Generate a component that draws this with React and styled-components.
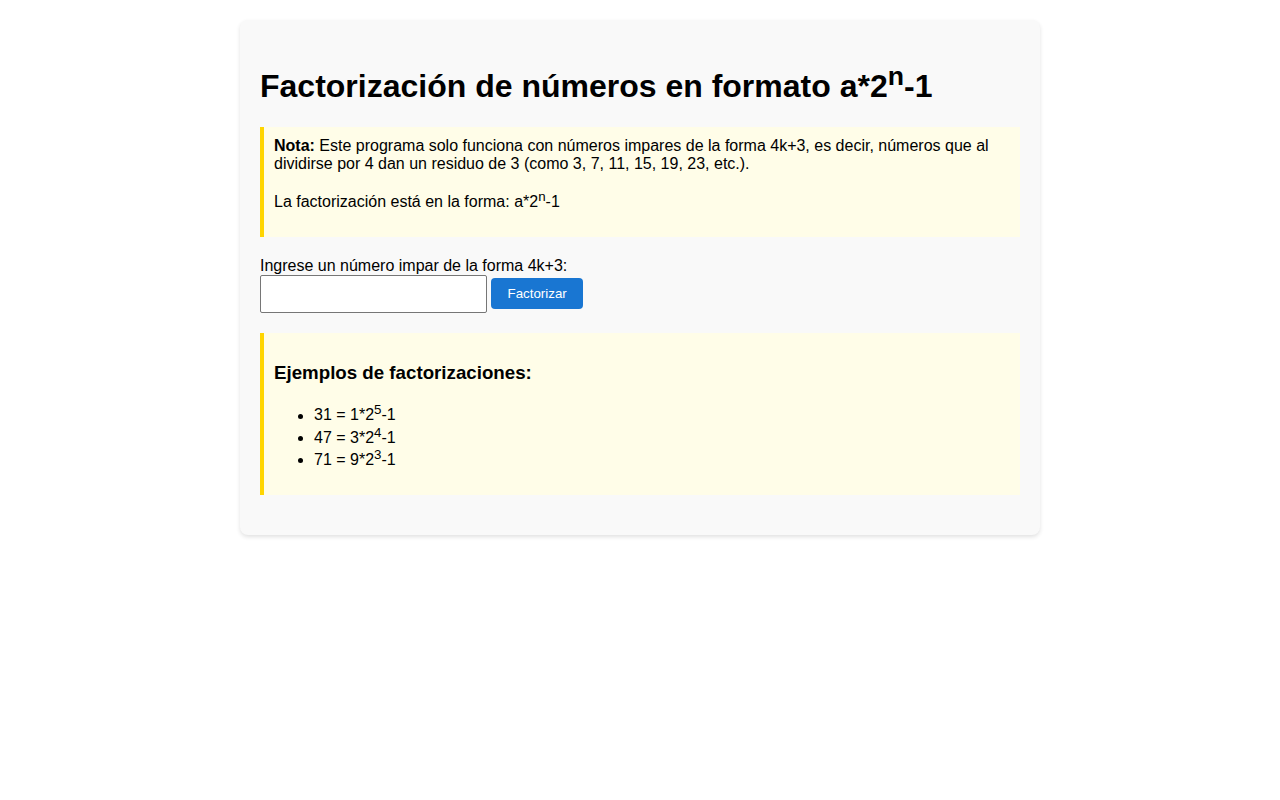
import styled, { createGlobalStyle } from "styled-components";

const GlobalStyle = createGlobalStyle`
  body {
    margin: 0;
    background: #ffffff;
    font-family: "Liberation Sans", Arial, sans-serif;
    color: #000;
  }
`;

const Container = styled.div`
  max-width: 800px;
  margin: 20px auto;
  padding: 20px;
  background: #f9f9f9;
  border-radius: 8px;
  box-shadow: 0 2px 4px rgba(0, 0, 0, 0.12);
  box-sizing: border-box;
`;

const Title = styled.h1`
  font-size: 32px;
  font-weight: bold;
  margin: 20.5px 0 22.4px;
`;

const InfoBox = styled.div`
  background: #fffde8;
  border-left: 4px solid #ffd500;
  padding: 10px;
  margin-bottom: 20px;
  font-size: 16px;

  p {
    margin: 16px 0;
  }
`;

const Form = styled.div`
  margin-bottom: 20px;
  font-size: 16px;
`;

const NumberInput = styled.input`
  width: 227px;
  height: 38px;
  box-sizing: border-box;
  padding: 8px;
  font-size: 16px;
  font-family: "Liberation Sans", Arial, sans-serif;
  border: 1px solid #767676;
  border-radius: 2px;
  background: #fff;
  vertical-align: middle;
`;

const Button = styled.button`
  margin-left: 4px;
  height: 31px;
  padding: 0 16.5px;
  background: #1976d2;
  color: #fff;
  border: none;
  border-radius: 4px;
  font-family: "Liberation Sans", Arial, sans-serif;
  font-size: 13.33px;
  cursor: pointer;
  vertical-align: middle;
`;

const Subtitle = styled.h3`
  font-size: 18.72px;
  font-weight: bold;
  margin: 18.72px 0;
`;

const List = styled.ul`
  margin: 16px 0;
  padding-left: 40px;
`;

const examples = [
  ["31", "1", "5"],
  ["47", "3", "4"],
  ["71", "9", "3"],
];

export default function App() {
  return (
    <>
      <GlobalStyle />
      <Container>
        <Title>
          Factorización de números en formato a*2<sup>n</sup>-1
        </Title>
        <InfoBox>
          <strong>Nota:</strong> Este programa solo funciona con números impares de la forma 4k+3, es decir,
          números que al dividirse por 4 dan un residuo de 3 (como 3, 7, 11, 15, 19, 23, etc.).
          <p>
            La factorización está en la forma: a*2<sup>n</sup>-1
          </p>
        </InfoBox>
        <Form>
          <label htmlFor="numero">Ingrese un número impar de la forma 4k+3:</label>
          <br />
          <NumberInput id="numero" type="number" />
          <Button>Factorizar</Button>
        </Form>
        <InfoBox>
          <Subtitle>Ejemplos de factorizaciones:</Subtitle>
          <List>
            {examples.map(([n, a, e]) => (
              <li key={n}>
                {n} = {a}*2<sup>{e}</sup>-1
              </li>
            ))}
          </List>
        </InfoBox>
      </Container>
    </>
  );
}
